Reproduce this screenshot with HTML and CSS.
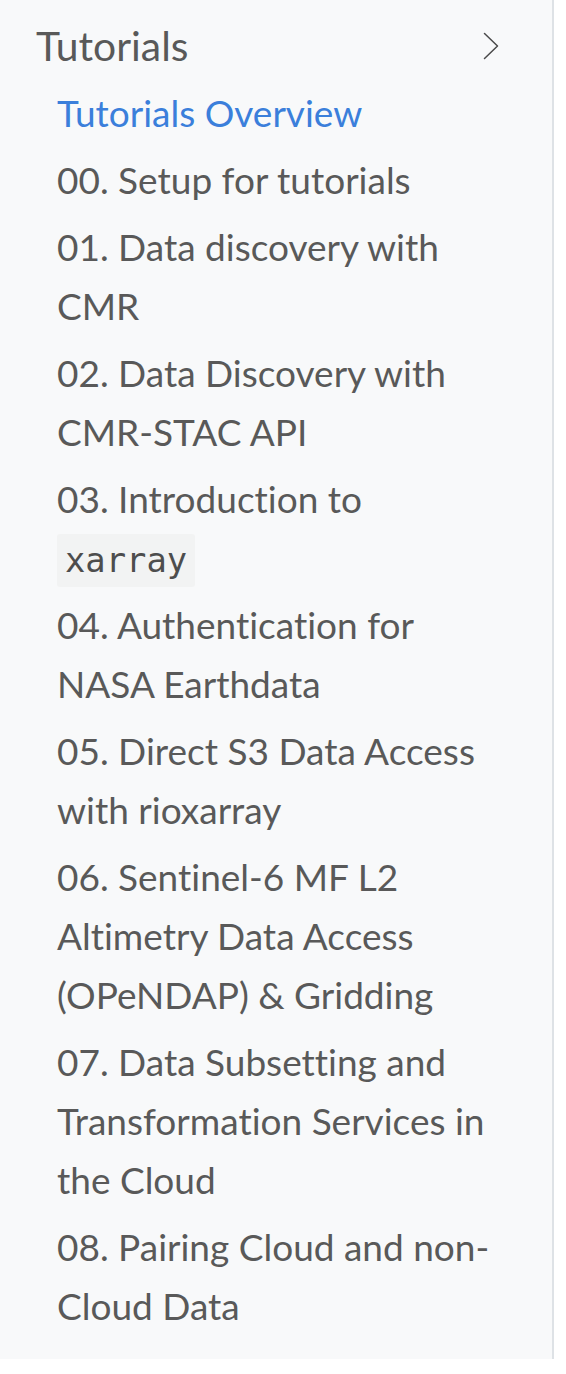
FILE: index.html
```html
<!DOCTYPE html>
<html lang="en">
<head>
<meta charset="utf-8">
<title>Tutorials</title>
<link rel="stylesheet" href="styles.css">
</head>
<body>
<nav class="sidebar">
  <div class="section-header">
    <span class="section-title">Tutorials</span>
    <svg class="chevron" width="16" height="28" viewBox="0 0 16 28" aria-hidden="true">
      <polyline points="1.5,1.5 14.5,14 1.5,26.5" fill="none" stroke="#4a4a4a" stroke-width="1.5" stroke-linecap="round" stroke-linejoin="round"/>
    </svg>
  </div>
  <ul class="menu">
    <li class="menu-item"><a class="menu-link active" href="#">Tutorials Overview</a></li>
    <li class="menu-item"><a class="menu-link" href="#">00. Setup for tutorials</a></li>
    <li class="menu-item"><a class="menu-link" href="#">01. Data discovery with CMR</a></li>
    <li class="menu-item"><a class="menu-link" href="#">02. Data Discovery with CMR-STAC API</a></li>
    <li class="menu-item"><a class="menu-link" href="#">03. Introduction to <code class="code">xarray</code></a></li>
    <li class="menu-item"><a class="menu-link" href="#">04. Authentication for NASA Earthdata</a></li>
    <li class="menu-item"><a class="menu-link" href="#">05. Direct S3 Data Access with rioxarray</a></li>
    <li class="menu-item"><a class="menu-link" href="#">06. Sentinel-6 MF L2 Altimetry Data Access (OPeNDAP) &amp; Gridding</a></li>
    <li class="menu-item"><a class="menu-link" href="#">07. Data Subsetting and Transformation Services in the Cloud</a></li>
    <li class="menu-item"><a class="menu-link" href="#">08. Pairing Cloud and non-Cloud Data</a></li>
  </ul>
</nav>
</body>
</html>
```

FILE: styles.css
```css
html, body {
  margin: 0;
  padding: 0;
  background: #ffffff;
}

body {
  font-family: Lato, "Noto Sans", sans-serif;
  font-variant-ligatures: none;
  font-feature-settings: "liga" 0, "clig" 0;
  color: #595959;
}

.sidebar {
  box-sizing: border-box;
  width: 554px;
  height: 1359px;
  overflow: hidden;
  background: #f8f9fa;
  border-right: 2px solid #dee2e6;
  padding: 14px 54px 0 36px;
}

.section-header {
  display: flex;
  align-items: center;
  justify-content: space-between;
  font-size: 40.8px;
  line-height: 63.6px;
  color: #595959;
}

.chevron {
  display: block;
  margin-right: -1px;
  margin-top: 1px;
}

.menu {
  list-style: none;
  margin: 1px 0 0 0;
  padding: 0 0 0 21px;
}

.menu-item {
  padding: 4px 0;
  font-size: 37px;
  line-height: 59px;
}

.menu-link {
  color: #595959;
  text-decoration: none;
}

.menu-link.active {
  color: #3b7fdb;
}

.code {
  font-family: "DejaVu Sans Mono", monospace;
  font-size: 33.8px;
  line-height: 1;
  padding: 7px 8px;
  background: #f2f3f3;
  color: #4d4d4d;
  border-radius: 3px;
}
```
